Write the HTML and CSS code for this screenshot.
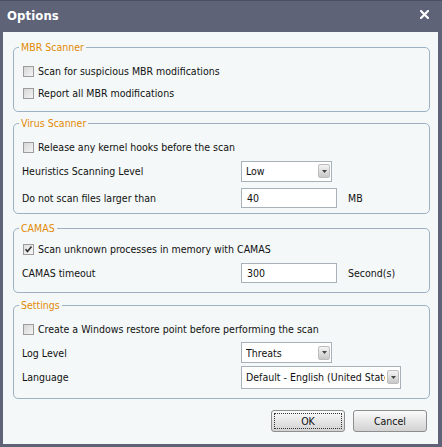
FILE: index.html
```html
<!DOCTYPE html>
<html>
<head>
<meta charset="utf-8">
<link rel="stylesheet" href="styles.css">
</head>
<body>
<div class="window">
  <div class="titlebar">
    <span class="title">Options</span>
    <span class="close"><svg width="9" height="9" viewBox="0 0 9 9"><path d="M1 1l7 7M8 1l-7 7" stroke="#fff" stroke-width="2.2" stroke-linecap="square"/></svg></span>
  </div>
  <div class="content">
    <fieldset class="group g-mbr">
      <legend>MBR Scanner</legend>
      <div class="row h22"><span class="cb"></span><span>Scan for suspicious MBR modifications</span></div>
      <div class="row h22"><span class="cb"></span><span>Report all MBR modifications</span></div>
    </fieldset>

    <fieldset class="group g-virus">
      <legend>Virus Scanner</legend>
      <div class="row h24"><span class="cb"></span><span>Release any kernel hooks before the scan</span></div>
      <div class="row h24"><span class="label">Heuristics Scanning Level</span>
        <div class="select"><span class="val">Low</span><span class="arrow"><svg width="5" height="3" viewBox="0 0 5 3"><path d="M0 0h5L2.5 3z" fill="#444"/></svg></span></div>
      </div>
      <div class="row h24 mt3"><span class="label">Do not scan files larger than</span>
        <div class="input">40</div><span class="unit">MB</span>
      </div>
    </fieldset>

    <fieldset class="group g-camas">
      <legend>CAMAS</legend>
      <div class="row h22"><span class="cb checked"><svg width="9" height="9" viewBox="0 0 9 9"><path d="M1.5 4.2l2 2.2 4-5" fill="none" stroke="#333" stroke-width="1.6"/></svg></span><span>Scan unknown processes in memory with CAMAS</span></div>
      <div class="row h26"><span class="label">CAMAS timeout</span>
        <div class="input">300</div><span class="unit">Second(s)</span>
      </div>
    </fieldset>

    <fieldset class="group g-settings">
      <legend>Settings</legend>
      <div class="row h24"><span class="cb"></span><span>Create a Windows restore point before performing the scan</span></div>
      <div class="row h23"><span class="label">Log Level</span>
        <div class="select"><span class="val">Threats</span><span class="arrow"><svg width="5" height="3" viewBox="0 0 5 3"><path d="M0 0h5L2.5 3z" fill="#444"/></svg></span></div>
      </div>
      <div class="row h26"><span class="label">Language</span>
        <div class="select wide"><span class="val">Default - English (United States)</span><span class="arrow"><svg width="5" height="3" viewBox="0 0 5 3"><path d="M0 0h5L2.5 3z" fill="#444"/></svg></span></div>
      </div>
    </fieldset>

    <div class="buttons">
      <button class="btn"><span class="focus">OK</span></button>
      <button class="btn">Cancel</button>
    </div>
  </div>
</div>
</body>
</html>
```
FILE: styles.css
```css
html, body {
  margin: 0;
  padding: 0;
  background: #5e6378;
}
body {
  font-family: "DejaVu Sans Condensed", "Liberation Sans", sans-serif;
  font-size: 10.5px;
  color: #111;
}
.window {
  width: 442px;
  height: 447px;
  box-sizing: border-box;
  background: #5e6378;
  border-top: 1px solid #4a4e60;
  padding: 0 4px 3px 3px;
  display: flex;
  flex-direction: column;
}
.titlebar {
  height: 29px;
  display: flex;
  align-items: center;
  padding: 0 9px 2px 4px;
  color: #fff;
}
.title {
  font-weight: bold;
  font-size: 13px;
  letter-spacing: 0.1px;
}
.close {
  margin-left: auto;
  display: flex;
  margin-top: -3px;
}
.content {
  flex: 1;
  background: #f4f8f8;
  padding: 9px 8px 0 10px;
  display: flex;
  flex-direction: column;
}
.group {
  margin: 0;
  padding: 0 8px;
  border: 1px solid #9cb2c4;
  border-radius: 5px;
  min-width: 0;
}
.group legend {
  color: #e28a06;
  padding: 0 2px;
  margin-left: -3px;
  line-height: 13px;
  height: 13px;
}
.g-mbr { padding-top: 6px; padding-bottom: 7px; }
.g-virus { margin-top: 5px; padding-top: 5px; padding-bottom: 3px; }
.g-camas { margin-top: 8px; padding-top: 3px; padding-bottom: 6px; }
.g-settings { margin-top: 6px; padding-top: 5px; padding-bottom: 8px; }

.row {
  display: flex;
  align-items: center;
}
.h22 { height: 22px; }
.h23 { height: 23px; }
.h24 { height: 24px; }
.h26 { height: 26px; }
.mt3 { margin-top: 3px; }

.cb {
  width: 11px;
  height: 11px;
  box-sizing: border-box;
  border: 1px solid #9c9c9c;
  background: linear-gradient(135deg, #d6d6d6, #f4f4f4);
  margin: 0 4px 0 1px;
  display: flex;
  align-items: center;
  justify-content: center;
}
.cb.checked {
  background: linear-gradient(135deg, #e0e0e0, #f8f8f8);
}
.label {
  width: 219px;
  flex: none;
}
.select {
  width: 91px;
  height: 21px;
  box-sizing: border-box;
  border: 1px solid #a8b0b8;
  background: #fff;
  display: flex;
  align-items: center;
  padding-left: 4px;
  overflow: hidden;
}
.select.wide {
  width: 160px;
  height: 23px;
}
.select .val {
  flex: 1;
  white-space: nowrap;
  overflow: hidden;
}
.arrow {
  flex: none;
  width: 12px;
  height: 14px;
  box-sizing: border-box;
  margin: 0 1px 0 2px;
  border: 1px solid #bdbdbd;
  border-radius: 2px;
  background: linear-gradient(#f4f4f4, #c8c8c8);
  display: flex;
  align-items: center;
  justify-content: center;
}
.input {
  width: 96px;
  height: 20px;
  box-sizing: border-box;
  border: 1px solid #a8b0b8;
  background: #fff;
  padding-left: 5px;
  display: flex;
  align-items: center;
}
.unit {
  margin-left: 11px;
}
.buttons {
  margin-top: 11px;
  margin-right: 3px;
  display: flex;
  justify-content: flex-end;
  gap: 8px;
}
.btn {
  width: 74px;
  height: 22px;
  box-sizing: border-box;
  border: 1px solid #8e8e8e;
  border-radius: 3px;
  background: linear-gradient(#fbfbfb, #e6e6e6 50%, #d2d2d2);
  font: inherit;
  color: #111;
  padding: 2px;
  display: flex;
  align-items: center;
  justify-content: center;
}
.btn .focus {
  width: 100%;
  height: 100%;
  box-sizing: border-box;
  border: 1px dotted #333;
  display: flex;
  align-items: center;
  justify-content: center;
}
```
